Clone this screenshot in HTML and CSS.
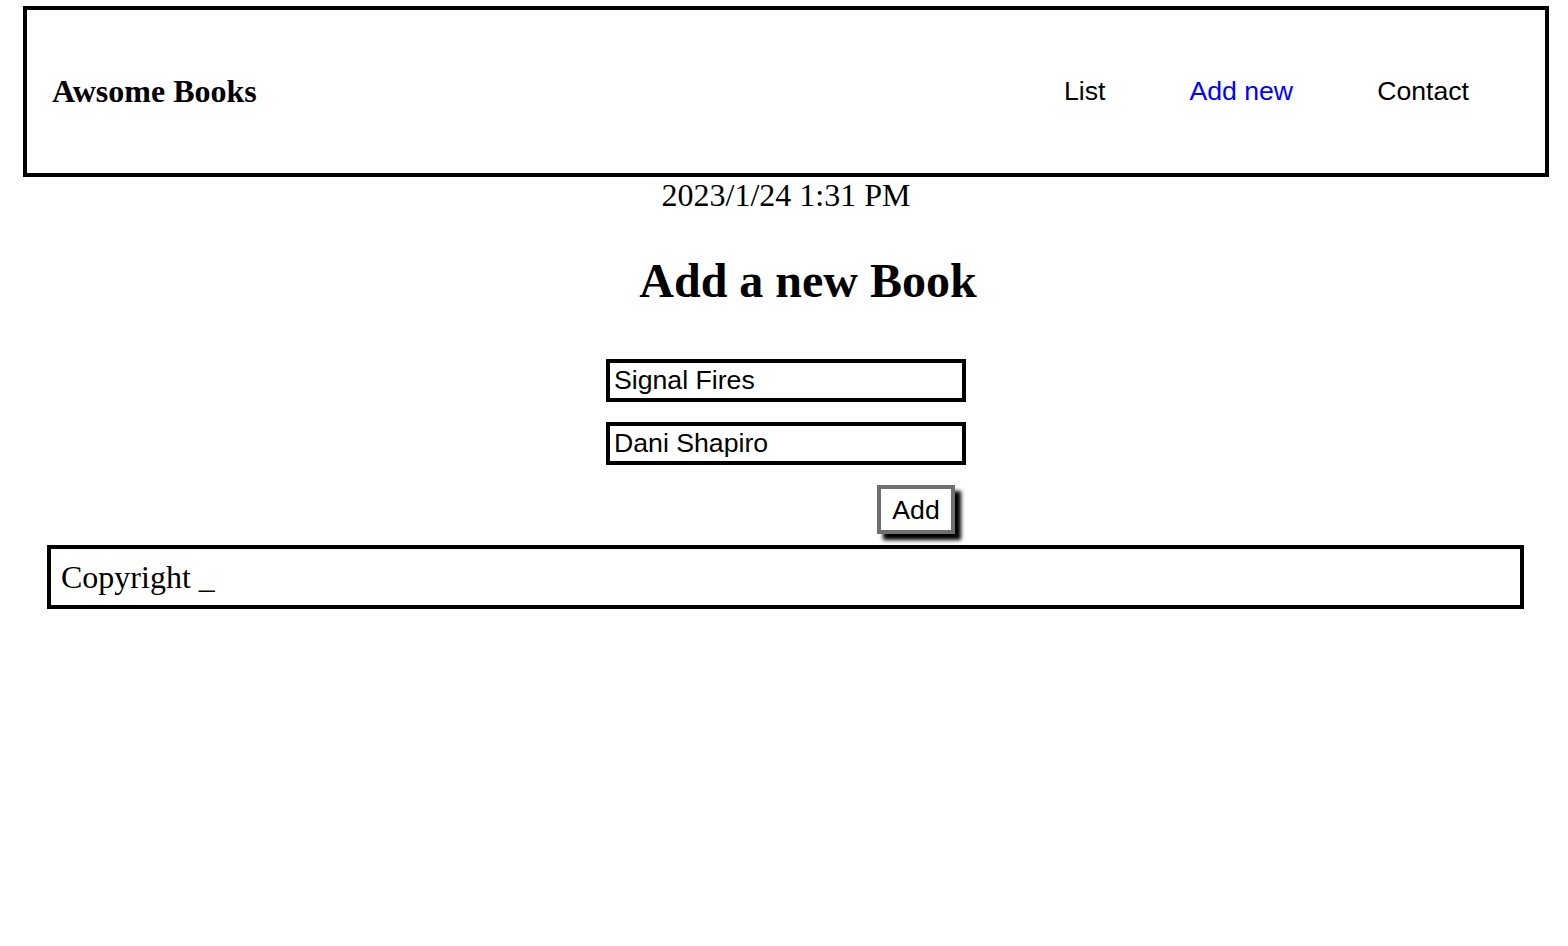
FILE: index.html
```html
<!DOCTYPE html>
<html lang="en">
<head>
<meta charset="utf-8">
<title>Awsome Books</title>
<link rel="stylesheet" href="styles.css">
</head>
<body>
<header class="site-header">
  <h2 class="logo">Awsome Books</h2>
  <nav class="nav">
    <a class="nav-link" href="#list">List</a>
    <a class="nav-link active" href="#add">Add new</a>
    <a class="nav-link" href="#contact">Contact</a>
  </nav>
</header>
<main class="main">
  <p class="date">2023/1/24 1:31 PM</p>
  <h1 class="title">Add a new Book</h1>
  <form class="book-form">
    <input class="field" type="text" value="Signal Fires">
    <input class="field" type="text" value="Dani Shapiro">
    <button class="add-btn" type="button">Add</button>
  </form>
</main>
<footer class="site-footer">Copyright _</footer>
</body>
</html>
```
FILE: styles.css
```css
html, body {
  margin: 0;
  padding: 0;
  background: #fff;
  color: #000;
  font-family: "Liberation Serif", "Times New Roman", serif;
}

.site-header {
  margin: 6px 19px 0 23px;
  height: 163px;
  border: 4px solid #000;
  display: flex;
  align-items: center;
  justify-content: space-between;
  padding: 0 76px 0 25px;
}

.logo {
  margin: 0 0 2px;
  font-size: 32px;
  font-weight: bold;
  line-height: 36px;
}

.nav {
  display: flex;
  gap: 84px;
  margin-bottom: 2px;
  font-family: "Liberation Sans", Arial, sans-serif;
  font-size: 26.67px;
  line-height: 30px;
}

.nav-link {
  color: #000;
  text-decoration: none;
}

.nav-link.active {
  color: #0000ff;
}

.main {
  margin: 0 19px 0 23px;
  display: flex;
  flex-direction: column;
  align-items: center;
}

.date {
  margin: 0;
  font-size: 32px;
  line-height: 36px;
}

.title {
  margin: 40px 0 0;
  padding-left: 44px;
  font-size: 48px;
  font-weight: bold;
  line-height: 55px;
}

.book-form {
  margin-top: 51px;
  width: 360px;
  display: flex;
  flex-direction: column;
}

.field {
  box-sizing: border-box;
  width: 360px;
  height: 43px;
  margin: 0 0 20px;
  padding: 0 4px;
  border: 4px solid #000;
  border-radius: 0;
  font-family: "Liberation Sans", Arial, sans-serif;
  font-size: 26.67px;
  color: #000;
  background: #fff;
  outline: none;
}

.add-btn {
  align-self: flex-end;
  margin-right: 11px;
  box-sizing: border-box;
  width: 78px;
  height: 49px;
  padding: 0;
  border: 4px solid #6f6f6f;
  border-radius: 0;
  background: #fff;
  color: #000;
  font-family: "Liberation Sans", Arial, sans-serif;
  font-size: 26.67px;
  line-height: 30px;
  box-shadow: 6px 6px 4px #000;
}

.site-footer {
  margin: 11px 44px 0 47px;
  height: 56px;
  box-sizing: content-box;
  border: 4px solid #000;
  padding: 0 10px;
  display: flex;
  align-items: center;
  font-size: 32px;
  line-height: 36px;
}
```
